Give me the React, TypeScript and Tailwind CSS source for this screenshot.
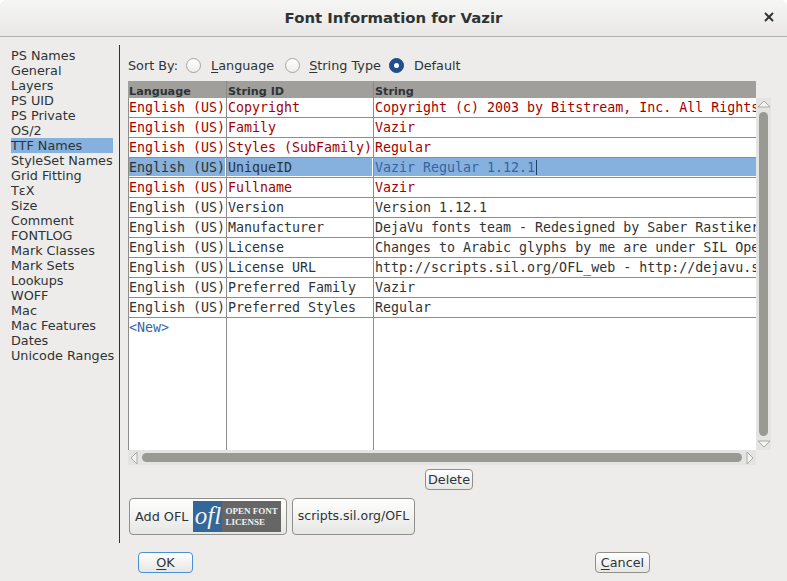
import { X } from 'lucide-react';

const SECTIONS = [
  'PS Names', 'General', 'Layers', 'PS UID', 'PS Private', 'OS/2', 'TTF Names', 'StyleSet Names',
  'Grid Fitting', 'TεX', 'Size', 'Comment', 'FONTLOG', 'Mark Classes', 'Mark Sets', 'Lookups',
  'WOFF', 'Mac', 'Mac Features', 'Dates', 'Unicode Ranges',
];

type Row = { id: string; value: string; tone: 'red' | 'black' | 'sel' };

const ROWS: Row[] = [
  { id: 'Copyright', value: 'Copyright (c) 2003 by Bitstream, Inc. All Rights', tone: 'red' },
  { id: 'Family', value: 'Vazir', tone: 'red' },
  { id: 'Styles (SubFamily)', value: 'Regular', tone: 'red' },
  { id: 'UniqueID', value: 'Vazir Regular 1.12.1', tone: 'sel' },
  { id: 'Fullname', value: 'Vazir', tone: 'red' },
  { id: 'Version', value: 'Version 1.12.1', tone: 'black' },
  { id: 'Manufacturer', value: 'DejaVu fonts team - Redesigned by Saber Rastiker', tone: 'black' },
  { id: 'License', value: 'Changes to Arabic glyphs by me are under SIL Ope', tone: 'black' },
  { id: 'License URL', value: 'http://scripts.sil.org/OFL_web - http://dejavu.s', tone: 'black' },
  { id: 'Preferred Family', value: 'Vazir', tone: 'black' },
  { id: 'Preferred Styles', value: 'Regular', tone: 'black' },
];

const TONE: Record<Row['tone'], string> = {
  red: 'text-[#a40000]',
  black: 'text-[#2e3436]',
  sel: 'text-[#2e3436]',
};

function Radio({ checked }: { checked?: boolean }) {
  return (
    <span
      className={`flex h-[15px] w-[15px] shrink-0 items-center justify-center rounded-full border ${
        checked ? 'border-[#1c4a85] bg-[#1f4f8c]' : 'border-[#a5a5a1] bg-gradient-to-b from-white to-[#ececea]'
      }`}
    >
      {checked && <span className="h-[5px] w-[5px] rounded-full bg-white" />}
    </span>
  );
}

function Arrow({ points }: { points: string }) {
  return (
    <svg width="14" height="14" viewBox="0 0 14 14" className="shrink-0">
      <polygon points={points} fill="#f4f4f2" stroke="#a9a9a5" strokeWidth="1" />
    </svg>
  );
}

function Button({ className, focused, children }: { className: string; focused?: boolean; children: React.ReactNode }) {
  return (
    <button
      type="button"
      className={`flex items-center justify-center rounded-[4px] border bg-gradient-to-b from-white to-[#e6e6e3] text-[#2e3436] ${
        focused ? 'border-[#4a90d9]' : 'border-[#8f8f8b]'
      } ${className}`}
    >
      {children}
    </button>
  );
}

export default function App() {
  return (
    <div className="h-[581px] w-[787px] overflow-hidden bg-white font-['DejaVu_Sans',sans-serif] text-[12.8px] text-[#2e3436]">
      <div className="flex h-full flex-col rounded-t-[7px] bg-[#edecea]">
        <header className="relative flex h-[37px] shrink-0 items-center justify-center rounded-t-[7px] border-b border-[#b2b2ae] bg-gradient-to-b from-[#f6f6f5] to-[#e9e8e6]">
          <h1 className="text-[14.9px] font-bold leading-none text-[#2e3436]">Font Information for Vazir</h1>
          <X className="absolute right-[11px] top-[10px] h-[14px] w-[14px] text-[#2e3436]" strokeWidth={3.2} />
        </header>

        <div className="flex min-h-0 flex-1">
          <nav className="mt-[11px] w-[119px] shrink-0 pl-[11px]">
            <ul className="mr-[6px] leading-[15px]">
              {SECTIONS.map((s) => (
                <li key={s} className={`h-[15px] whitespace-nowrap ${s === 'TTF Names' ? 'bg-[#86b0dd]' : ''}`}>
                  {s}
                </li>
              ))}
            </ul>
          </nav>

          <div className="mt-[8px] flex h-[498px] min-w-0 flex-1 flex-col border-l border-[#2e3436] pl-[8px]">
            <div className="flex h-[36px] shrink-0 items-center pt-[4px]">
              <span className="mt-[2px]">Sort By:</span>
              <span className="ml-[8px]"><Radio /></span>
              <span className="ml-[10px] mt-[2px]"><span className="underline decoration-1 underline-offset-2">L</span>anguage</span>
              <span className="ml-[11px]"><Radio /></span>
              <span className="ml-[9px] mt-[2px]"><span className="underline decoration-1 underline-offset-2">S</span>tring Type</span>
              <span className="ml-[8px]"><Radio checked /></span>
              <span className="ml-[10px] mt-[2px]">Default</span>
            </div>

            <div className="flex w-[644px] flex-col">
              <div className="flex">
                <div className="w-[628px]">
                  <div className="grid h-[17px] grid-cols-[99px_147px_1fr] bg-[#a09f9c] text-[11.2px] font-bold leading-[21px] text-[#2e3436]">
                    <span className="h-[17px] border-r border-[#8a8a86] pl-px">Language</span>
                    <span className="h-[17px] border-r border-[#8a8a86] pl-px">String ID</span>
                    <span className="h-[17px] pl-px">String</span>
                  </div>
                  <div className="flex h-[352px] flex-col border-l border-[#8d8d8d] bg-white font-['DejaVu_Sans_Mono',monospace] text-[13.3px] leading-[20px]">
                    {ROWS.map((r) => {
                      const sel = r.tone === 'sel';
                      return (
                        <div
                          key={r.id}
                          className={`grid h-[20px] shrink-0 grid-cols-[98px_147px_minmax(0,1fr)] border-b border-[#8d8d8d] ${TONE[r.tone]}`}
                        >
                          <span className="border-r border-[#8d8d8d] pr-px">
                            <span className={`block h-[18px] overflow-hidden whitespace-nowrap ${sel ? 'bg-[#86b0dd]' : ''}`}>English (US)</span>
                          </span>
                          <span className="border-r border-[#8d8d8d] pr-px">
                            <span className={`block h-[18px] overflow-hidden whitespace-nowrap pl-px ${sel ? 'bg-[#86b0dd]' : ''}`}>{r.id}</span>
                          </span>
                          {sel ? (
                            <span className="block h-[18px] overflow-hidden whitespace-nowrap bg-[#86b0dd] pl-px text-[#3465a4]">
                              <span className="border-r border-[#1f3d66] pr-px">{r.value}</span>
                            </span>
                          ) : (
                            <span className="block h-[18px] overflow-hidden whitespace-nowrap pl-px">{r.value}</span>
                          )}
                        </div>
                      );
                    })}
                    <div className="grid min-h-0 flex-1 grid-cols-[98px_147px_minmax(0,1fr)]">
                      <span className="border-r border-[#8d8d8d] text-[#3465a4]">&lt;New&gt;</span>
                      <span className="border-r border-[#8d8d8d]" />
                      <span />
                    </div>
                  </div>
                </div>

                <div className="mt-[17px] flex h-[352px] w-[15px] flex-col items-center bg-[#e4e4e2]">
                  <Arrow points="1,9 7,3 13,9" />
                  <div className="w-[9px] flex-1 rounded-full bg-[#9a9a94]" />
                  <Arrow points="1,5 13,5 7,11" />
                </div>
              </div>

              <div className="flex h-[15px] w-[628px] items-center bg-[#e4e4e2]">
                <Arrow points="9,1 9,13 3,7" />
                <div className="h-[9px] flex-1 rounded-full bg-[#9a9a94]" />
                <Arrow points="5,1 5,13 11,7" />
              </div>
            </div>

            <div className="mt-[4px] flex w-[642px] justify-center">
              <Button className="h-[21px] w-[48px]">Delete</Button>
            </div>

            <div className="ml-px mt-[8px] flex gap-[5px]">
              <Button className="h-[37px] w-[158px] justify-start gap-[5px] px-[5px]">
                <span className="whitespace-nowrap">Add OFL</span>
                <span className="flex h-[31px] w-[88px] shrink-0 bg-[#666666] text-[#f2f2f2]">
                  <span className="flex w-[29px] items-center justify-center bg-[#336699] pb-[2px] font-['Liberation_Serif',serif] text-[25px] italic leading-none">ofl</span>
                  <span className="flex flex-1 flex-col justify-center pl-[3px] text-left font-['Liberation_Serif',serif] text-[9px] font-bold leading-[11px]">
                    <span className="whitespace-nowrap">OPEN FONT</span>
                    <span>LICENSE</span>
                  </span>
                </span>
              </Button>
              <Button className="h-[37px] w-[123px] whitespace-nowrap text-[12.5px]">scripts.sil.org/OFL</Button>
            </div>
          </div>
        </div>

        <footer className="flex h-[38px] shrink-0 items-start justify-between pl-[138px] pr-[137px] pt-[9px]">
          <Button focused className="h-[21px] w-[55px]">
            <span><span className="underline decoration-1 underline-offset-2">O</span>K</span>
          </Button>
          <Button className="h-[21px] w-[55px]">
            <span><span className="underline decoration-1 underline-offset-2">C</span>ancel</span>
          </Button>
        </footer>
      </div>
    </div>
  );
}
